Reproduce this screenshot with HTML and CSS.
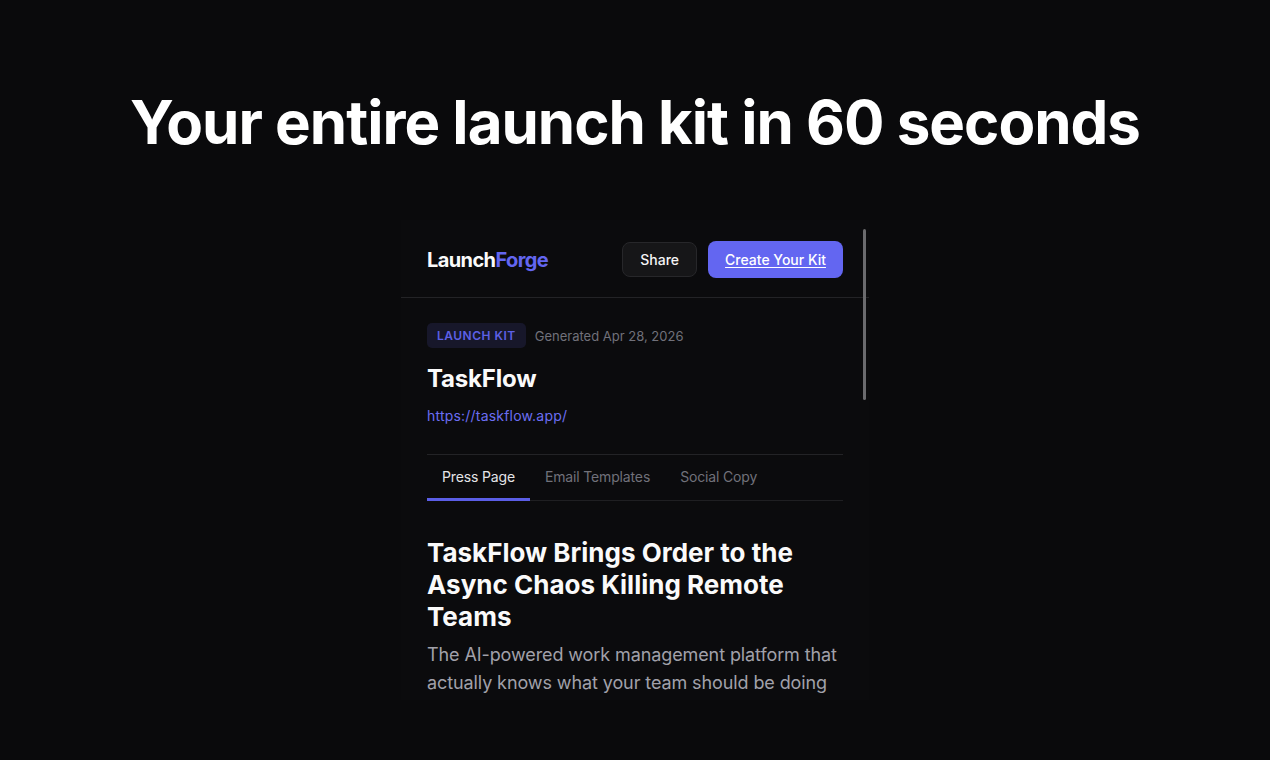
FILE: index.html
```html
<!DOCTYPE html>
<html lang="en">
<head>
<meta charset="utf-8">
<title>LaunchForge</title>
<link rel="stylesheet" href="styles.css">
</head>
<body>
<main class="page">
  <h1 class="hero-title">Your entire launch kit in 60 seconds</h1>
  <section class="frame">
    <header class="app-header">
      <div class="logo">Launch<span class="logo-accent">Forge</span></div>
      <div class="actions">
        <button class="btn btn-share">Share</button>
        <a class="btn btn-primary" href="#">Create Your Kit</a>
      </div>
    </header>
    <div class="content">
      <div class="meta">
        <span class="badge">LAUNCH KIT</span>
        <span class="generated">Generated Apr 28, 2026</span>
      </div>
      <h2 class="product">TaskFlow</h2>
      <a class="url" href="#">https://taskflow.app/</a>
      <nav class="tabs">
        <span class="tab active">Press Page</span>
        <span class="tab">Email Templates</span>
        <span class="tab">Social Copy</span>
      </nav>
      <h3 class="headline">TaskFlow Brings Order to the Async Chaos Killing Remote Teams</h3>
      <p class="sub">The AI-powered work management platform that actually knows what your team should be doing</p>
    </div>
    <div class="scrollbar"></div>
  </section>
</main>
</body>
</html>
```
FILE: styles.css
```css
* { box-sizing: border-box; }
html, body { margin: 0; padding: 0; }
body {
  background: #0a0a0c;
  color: #fafafa;
  font-family: Inter, "Noto Sans", sans-serif;
  height: 760px;
  overflow: hidden;
}
.page {
  display: flex;
  flex-direction: column;
  align-items: center;
  padding-top: 86px;
}
.hero-title {
  margin: 0;
  font-size: 60px;
  line-height: 72px;
  font-weight: 700;
  letter-spacing: -1px;
  color: #ffffff;
}
.frame {
  position: relative;
  margin-top: 62px;
  width: 468px;
  height: 480px;
  overflow: hidden;
  background: #0b0b0d;
}
.app-header {
  display: flex;
  align-items: center;
  justify-content: space-between;
  padding: 21px 26px 19px 26px;
  border-bottom: 1px solid #232326;
}
.logo {
  font-size: 20px;
  font-weight: 700;
  letter-spacing: -0.6px;
  color: #fafafa;
}
.logo-accent { color: #6366f1; }
.actions {
  display: flex;
  align-items: center;
  gap: 11px;
}
.btn {
  font-family: inherit;
  font-size: 14px;
  font-weight: 500;
  line-height: 19px;
  border-radius: 8px;
}
.btn-share {
  background: #161618;
  color: #f4f4f5;
  border: 1px solid #27272a;
  padding: 7px 17px;
}
.btn-primary {
  background: #6366f1;
  color: #ffffff;
  padding: 9px 17px;
  text-decoration: underline;
  text-underline-offset: 2px;
}
.content {
  padding: 25px 26px 0 26px;
}
.meta {
  display: flex;
  align-items: center;
  gap: 9px;
}
.badge {
  background: #17172a;
  color: #5d60e6;
  font-size: 12px;
  font-weight: 600;
  letter-spacing: 0.5px;
  line-height: 17px;
  padding: 4px 10px;
  border-radius: 5px;
}
.generated {
  color: #71717a;
  font-size: 13px;
}
.product {
  margin: 15px 0 0 0;
  font-size: 24px;
  line-height: 32px;
  font-weight: 700;
  letter-spacing: -0.2px;
  color: #fafafa;
}
.url {
  display: block;
  margin-top: 11px;
  font-size: 14px;
  line-height: 20px;
  letter-spacing: 0.2px;
  color: #6b6ef3;
  text-decoration: none;
}
.tabs {
  display: flex;
  margin-top: 28px;
  border-top: 1px solid #232326;
  border-bottom: 1px solid #1f1f22;
}
.tab {
  padding: 12px 15px 11px 15px;
  font-size: 14px;
  line-height: 20px;
  letter-spacing: -0.15px;
  color: #71717a;
  border-bottom: 3px solid transparent;
  margin-bottom: -1px;
}
.tab.active {
  color: #e4e4e7;
  border-bottom-color: #5b5ee6;
}
.headline {
  margin: 36px 0 0 0;
  font-size: 26px;
  line-height: 32px;
  font-weight: 700;
  letter-spacing: 0px;
  color: #fafafa;
}
.sub {
  margin: 8px 0 0 0;
  font-size: 18px;
  line-height: 28px;
  letter-spacing: -0.1px;
  color: #a1a1aa;
}
.scrollbar {
  position: absolute;
  top: 9px;
  left: 462px;
  width: 3px;
  height: 171px;
  background: #6b6b6e;
  border-radius: 2px;
}
```
